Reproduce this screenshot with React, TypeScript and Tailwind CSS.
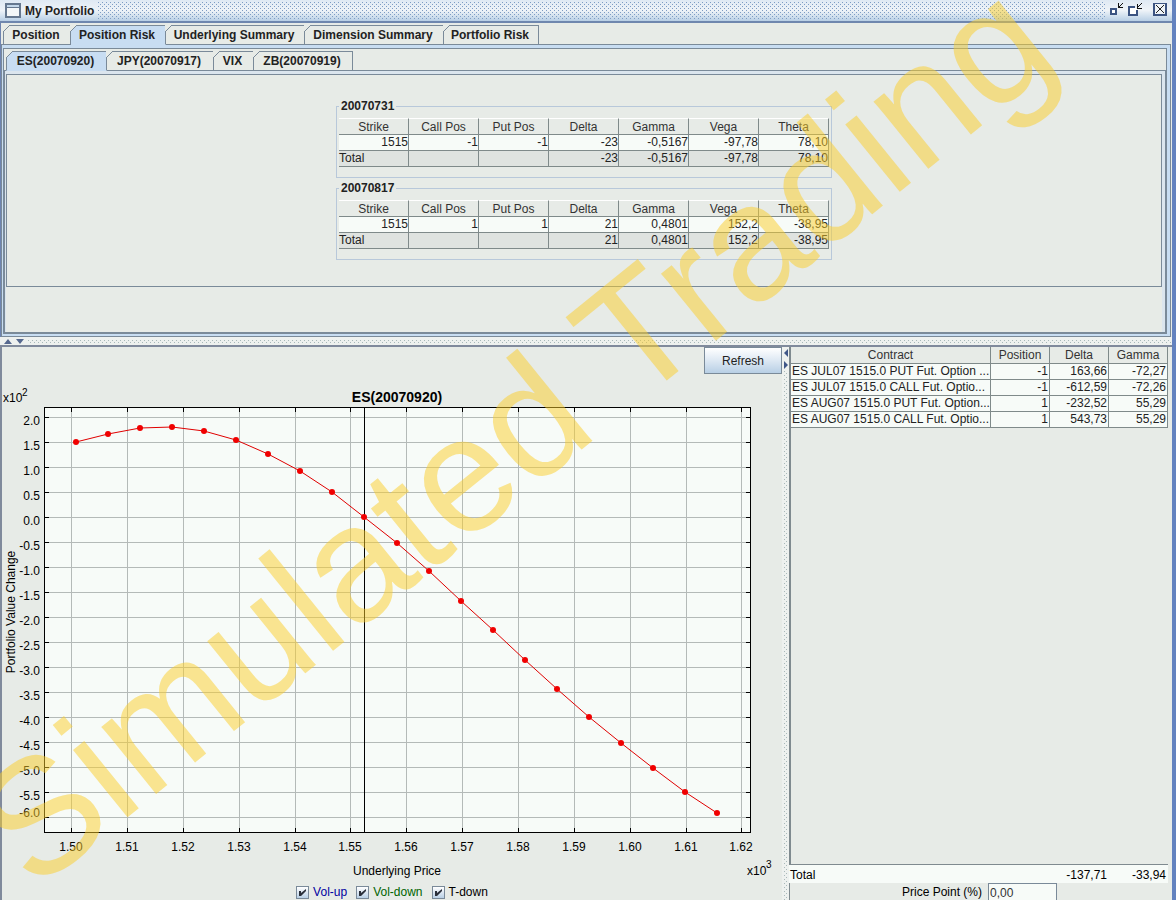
import React, { useState } from 'react';
import clsx from 'clsx';

interface RiskGroup {
    expiry: string;
    row: string[];
    total: string[];
}

interface Tab {
    name: string;
    width: string;
}

const PORTFOLIO_TABS: Tab[] = [
    { name: 'Position', width: 'w-[68px]' },
    { name: 'Position Risk', width: 'w-[95px]' },
    { name: 'Underlying Summary', width: 'w-[139px]' },
    { name: 'Dimension Summary', width: 'w-[139px]' },
    { name: 'Portfolio Risk', width: 'w-[95px]' },
];

const UNDERLYING_TABS: Tab[] = [
    { name: 'ES(20070920)', width: 'w-[101px]' },
    { name: 'JPY(20070917)', width: 'w-[107px]' },
    { name: 'VIX', width: 'w-10' },
    { name: 'ZB(20070919)', width: 'w-[99px]' },
];

const RISK_COLUMNS = ['Strike', 'Call Pos', 'Put Pos', 'Delta', 'Gamma', 'Vega', 'Theta'];

const RISK_GROUPS: RiskGroup[] = [
    {
        expiry: '20070731',
        row: ['1515', '-1', '-1', '-23', '-0,5167', '-97,78', '78,10'],
        total: ['Total', '', '', '-23', '-0,5167', '-97,78', '78,10'],
    },
    {
        expiry: '20070817',
        row: ['1515', '1', '1', '21', '0,4801', '152,2', '-38,95'],
        total: ['Total', '', '', '21', '0,4801', '152,2', '-38,95'],
    },
];

const CONTRACTS = [
    ['ES JUL07 1515.0 PUT Fut. Option ...', '-1', '163,66', '-72,27'],
    ['ES JUL07 1515.0 CALL Fut. Optio...', '-1', '-612,59', '-72,26'],
    ['ES AUG07 1515.0 PUT Fut. Option...', '1', '-232,52', '55,29'],
    ['ES AUG07 1515.0 CALL Fut. Optio...', '1', '543,73', '55,29'],
];

// Chart geometry, in the units of the chart's viewBox
const X_TICKS = [71, 127, 183, 239, 295, 350, 406, 462, 518, 574, 630, 686, 741];
const Y_TICKS = Array.from({ length: 17 }, (_, i) => 417 + i * 25);
const CURVE = [
    [76, 442], [108, 434], [140, 428], [172, 427], [204, 431], [236, 440], [268, 454],
    [300, 471], [332, 492], [364, 517], [397, 543], [429, 571], [461, 601], [493, 630],
    [525, 660], [557, 689], [589, 717], [621, 743], [653, 768], [685, 792], [717, 813],
];

const Grip: React.FC<{ id: string; size: number; color: string; className: string }> = ({ id, size, color, className }) => (
    <svg className={className} shapeRendering="crispEdges" aria-hidden="true">
        <defs>
            <pattern id={id} width={size} height={size} patternUnits="userSpaceOnUse">
                <rect x="0" y="0" width="1" height="1" fill={color} />
                <rect x={size / 2} y={size / 2} width="1" height="1" fill={color} />
            </pattern>
        </defs>
        <rect width="100%" height="100%" fill={`url(#${id})`} />
    </svg>
);

const TitleBar: React.FC = () => (
    <header className="flex h-[23px] items-center border-b-2 border-[#6f87ae] bg-linear-to-b from-[#dfe9f3] via-[#eef3f8] to-[#b8cfe5] pl-[5px] pr-1">
        <svg className="h-4 w-4" viewBox="0 0 16 16" shapeRendering="crispEdges" aria-hidden="true">
            <rect x="0" y="0" width="16" height="15" fill="#66788f" />
            <rect x="2" y="5" width="12" height="8" fill="#f4f7f8" />
            <rect x="2" y="2" width="12" height="2" fill="#c4d8ea" />
        </svg>
        <h1 className="ml-1 text-xs font-bold text-[#222]">My Portfolio</h1>
        <Grip id="title-grip" size={4} color="#7d9cc4" className="ml-1 h-[18px] min-w-0 flex-1" />
        <div className="ml-1 flex items-center">
            <button aria-label="Minimize" className="h-4 w-4">
                <svg viewBox="0 0 16 16" className="h-4 w-4" shapeRendering="crispEdges">
                    <rect x="2" y="6" width="5" height="5" fill="#fff" stroke="#3c5482" strokeWidth="2" />
                    <path d="M14 0L10 4M9.500 0V4.500H14" fill="none" stroke="#111" />
                </svg>
            </button>
            <button aria-label="Maximize" className="ml-[3px] h-4 w-4">
                <svg viewBox="0 0 16 16" className="h-4 w-4" shapeRendering="crispEdges">
                    <path d="M7 4H1V12H9V7" fill="#fff" stroke="#3c5482" strokeWidth="2" />
                    <path d="M14 0L9 5M9.500 1V5.500H14" fill="none" stroke="#111" />
                </svg>
            </button>
            <button aria-label="Close" className="ml-2 h-4 w-4">
                <svg viewBox="0 0 16 16" className="h-4 w-4">
                    <rect x="2" y="0" width="12" height="12" fill="#eef3f8" stroke="#3c5482" strokeWidth="2" />
                    <path d="M4 2L12 10M12 2L4 10" stroke="#222" />
                </svg>
            </button>
        </div>
    </header>
);

interface TabsProps {
    label: string;
    tabs: Tab[];
    selected: string;
    onSelect: (tab: string) => void;
}

const Tabs: React.FC<TabsProps> = ({ label, tabs, selected, onSelect }) => (
    <div role="tablist" aria-label={label} className="relative z-10 -mb-px flex">
        {tabs.map(({ name, width }, index) => (
            <button
                key={name}
                role="tab"
                aria-selected={name === selected}
                onClick={() => onSelect(name)}
                className={clsx(
                    'relative h-5 whitespace-nowrap border-b border-r border-t border-[#7a8a99] pr-0.5 text-xs font-bold text-[#222]',
                    width,
                    index === 0 && 'border-l',
                    name === selected ? 'border-b-[#c8ddf2] bg-[#c8ddf2]' : 'bg-[#e7ebe7]',
                )}
            >
                <svg className="absolute -left-px -top-px h-[7px] w-[7px]" viewBox="0 0 7 7" aria-hidden="true">
                    <path d="M0 0H7L0 7Z" fill="#e7ebe7" />
                    <path d="M0 7L7 0" stroke="#7a8a99" />
                </svg>
                {name}
            </button>
        ))}
    </div>
);

const RiskTable: React.FC<{ group: RiskGroup }> = ({ group }) => (
    <fieldset className="border border-[#b8c8da] px-0.5 pb-2.5 pt-1">
        <legend className="px-0.5 text-xs font-bold text-[#222]">{group.expiry}</legend>
        <table className="w-[490px] table-fixed border-separate border-spacing-0 text-xs leading-[15px] text-[#222]">
            <thead>
                <tr>
                    {RISK_COLUMNS.map(column => (
                        <th key={column} className="h-[17px] border-b border-r border-t border-[#7f8a8a] border-t-white p-0 pt-px font-normal leading-[14px] text-[#333]">
                            {column}
                        </th>
                    ))}
                </tr>
            </thead>
            <tbody>
                <tr className="bg-[#f7fbf8]">
                    {group.row.map((value, i) => (
                        <td key={i} className="h-4 border-b border-r border-[#7f8a8a] p-0 text-right">{value}</td>
                    ))}
                </tr>
                <tr className="bg-[#dfe3e0]">
                    {group.total.map((value, i) => (
                        <td key={i} className={clsx('h-4 border-b border-r border-[#7f8a8a] p-0', i > 0 && 'text-right')}>{value}</td>
                    ))}
                </tr>
            </tbody>
        </table>
    </fieldset>
);

const RiskChart: React.FC = () => (
    <svg viewBox="2 374 780 510" className="block w-full shrink-0 text-xs" role="img" aria-label="Portfolio value change by underlying price">
        <g shapeRendering="crispEdges">
            <rect x="44.5" y="407.5" width="706" height="425" fill="#f7fbf8" />
            {X_TICKS.map(x => <path key={x} d={`M${x + 0.5} 408V832`} stroke="#b4bab8" />)}
            {Y_TICKS.map(y => <path key={y} d={`M45 ${y + 0.5}H750`} stroke="#b4bab8" />)}
            {X_TICKS.map(x => <path key={x} d={`M${x + 0.5} 408v4M${x + 0.5} 832v-4`} stroke="#000" />)}
            {Y_TICKS.map(y => <path key={y} d={`M45 ${y + 0.5}h4M750 ${y + 0.5}h-4`} stroke="#000" />)}
            <rect x="44.5" y="407.5" width="706" height="425" fill="none" stroke="#000" />
            <path d="M364.5 408V832" stroke="#000" />
        </g>
        <polyline points={CURVE.map(point => point.join(',')).join(' ')} fill="none" stroke="#e00000" />
        {CURVE.map(([x, y]) => <circle key={x} cx={x} cy={y} r="3" fill="#f00000" />)}

        <text x="397" y="402" textAnchor="middle" className="text-sm font-bold">ES(20070920)</text>
        <text x="3" y="402">x10</text>
        <text x="22" y="396" className="text-[10px]">2</text>
        {Y_TICKS.map((y, i) => (
            <text key={y} x="40" y={i === 16 ? y : y + 8} textAnchor="end">{(2 - i / 2).toFixed(1)}</text>
        ))}
        {X_TICKS.map((x, i) => (
            <text key={x} x={x} y="851" textAnchor="middle">{(1.5 + i / 100).toFixed(2)}</text>
        ))}
        <text x="397" y="875" textAnchor="middle">Underlying Price</text>
        <text x="747" y="875">x10</text>
        <text x="766" y="868" className="text-[10px]">3</text>
        <text transform="translate(15 612) rotate(-90)" textAnchor="middle">Portfolio Value Change</text>
    </svg>
);

const CurveToggle: React.FC<{ label: string; className: string }> = ({ label, className }) => {
    const [checked, setChecked] = useState(true);

    return (
        <label className={clsx('flex items-center gap-1', className)}>
            <span className="relative h-[13px] w-[13px]">
                <input
                    type="checkbox"
                    checked={checked}
                    onChange={e => setChecked(e.target.checked)}
                    className="block h-[13px] w-[13px] appearance-none border border-[#7a8a99] bg-linear-to-b from-white to-[#b8cfe5]"
                />
                {checked && (
                    <svg className="pointer-events-none absolute inset-0 h-[13px] w-[13px]" viewBox="0 0 13 13">
                        <path d="M3 5H5V7L10 3V5L5 10H3Z" fill="#2a2f3a" />
                    </svg>
                )}
            </span>
            {label}
        </label>
    );
};

const ContractPane: React.FC = () => (
    <section className="flex w-[383px] shrink-0 flex-col pr-1">
        <div className="min-h-[518px] border-b border-l-2 border-[#7f8a8f]">
            <table className="w-full table-fixed border-separate border-spacing-0 text-xs leading-[15px] text-[#222]">
                <colgroup>
                    <col />
                    <col className="w-[59px]" />
                    <col className="w-[59px]" />
                    <col className="w-[59px]" />
                </colgroup>
                <thead>
                    <tr>
                        {['Contract', 'Position', 'Delta', 'Gamma'].map(column => (
                            <th key={column} className="h-[17px] border-b border-r border-[#7f8a8a] p-0 pt-px font-normal text-[#333]">{column}</th>
                        ))}
                    </tr>
                </thead>
                <tbody className="bg-[#f7fbf8]">
                    {CONTRACTS.map(([name, ...values]) => (
                        <tr key={name}>
                            <td className="h-4 overflow-hidden whitespace-nowrap border-b border-r border-[#7f8a8a] p-0 pl-px">{name}</td>
                            {values.map((value, i) => (
                                <td key={i} className="h-4 border-b border-r border-[#7f8a8a] p-0 pr-px text-right">{value}</td>
                            ))}
                        </tr>
                    ))}
                </tbody>
            </table>
        </div>
        <div className="flex h-[19px] items-center bg-[#f7fbf8] pl-px pr-0.5 pt-0.5 text-xs">
            <span className="flex-1">Total</span>
            <span className="w-[59px] text-right">-137,71</span>
            <span className="w-[59px] text-right">-33,94</span>
        </div>
        <div className="flex items-start border-l border-[#7f8a8f] pl-[112px] text-xs leading-4">
            <label htmlFor="price-point" className="pt-px">Price Point (%)</label>
            <input
                id="price-point"
                defaultValue="0,00"
                className="ml-auto mr-[111px] h-[19px] w-[69px] border border-[#7a8a99] bg-[#f7fbf8] px-px text-[#333]"
            />
        </div>
    </section>
);

export default function App() {
    const [view, setView] = useState('Position Risk');
    const [underlying, setUnderlying] = useState('ES(20070920)');

    return (
        <div className="relative flex h-screen flex-col overflow-hidden border-r-4 border-[#6382bf] bg-[#e7ebe7] font-['Liberation_Sans',Arial,sans-serif] text-black">
            <TitleBar />

            <section className="border-l border-[#6e84b0] pr-px pt-0.5">
                <div className="pl-0.5">
                    <Tabs label="Portfolio views" tabs={PORTFOLIO_TABS} selected={view} onSelect={setView} />
                </div>
                <div className="border border-[#7a8a99] bg-[#c8ddf2] pb-0.5 pl-px pr-[3px] pt-[3px]">
                    <div className="border border-[#7a8a99] bg-[#e7ebe7] pt-0.5">
                        <div className="pl-0.5">
                            <Tabs label="Underlyings" tabs={UNDERLYING_TABS} selected={underlying} onSelect={setUnderlying} />
                        </div>
                        <div className="border border-[#7a8a99] bg-[#dbe5ee] pl-px pr-[3px] pt-[3px]">
                            <div className="bg-[#e7ebe7]">
                                <div className="flex flex-col items-center gap-0.5 border border-[#7a8a99] pb-[26px] pt-[23px]">
                                    {RISK_GROUPS.map(group => <RiskTable key={group.expiry} group={group} />)}
                                </div>
                                <div className="h-[45px]" />
                            </div>
                        </div>
                    </div>
                </div>
            </section>

            <div className="flex h-2 shrink-0 items-center bg-[#eef1ef] pl-1">
                <svg className="h-[5px] w-5" viewBox="0 0 20 5" aria-hidden="true">
                    <path d="M0 5L4 0L8 5ZM12 0H20L16 5Z" fill="#56698f" />
                </svg>
                <Grip id="row-grip" size={4} color="#a9b9ba" className="ml-1 h-[3px] min-w-0 flex-1" />
            </div>

            <div className="flex min-h-0 flex-1 border-l-2 border-t-2 border-[#808a9c]">
                <section className="flex min-w-0 flex-1 flex-col">
                    <button className="h-[27px] w-[78px] shrink-0 self-end border border-[#7a8a99] bg-linear-to-b from-white via-[#dde8f3] to-[#b8cfe5] text-xs text-[#222]">
                        Refresh
                    </button>
                    <RiskChart />
                    <div className="flex items-center justify-center gap-[9px] pt-px text-xs leading-[15px]">
                        <CurveToggle label="Vol-up" className="text-[#0000a0]" />
                        <CurveToggle label="Vol-down" className="text-[#006400]" />
                        <CurveToggle label="T-down" className="text-black" />
                    </div>
                </section>

                <div className="flex w-[7px] shrink-0 flex-col items-center bg-[#eef1ef]">
                    <svg className="h-6 w-[5px] shrink-0" viewBox="0 0 5 24" aria-hidden="true">
                        <path d="M5 2V10L1 6ZM1 14V22L5 18Z" fill="#3f5687" />
                    </svg>
                    <Grip id="column-grip" size={4} color="#a9b9ba" className="min-h-0 w-[3px] flex-1" />
                </div>

                <ContractPane />
            </div>

            <svg className="pointer-events-none absolute inset-0 h-full w-[calc(100%+4px)]" viewBox="0 0 1176 900" aria-hidden="true">
                <text transform="translate(34 893) rotate(-39)" className="fill-[#fbcd28]/50 text-[164px]">
                    Simulated Trading
                </text>
            </svg>
        </div>
    );
}
